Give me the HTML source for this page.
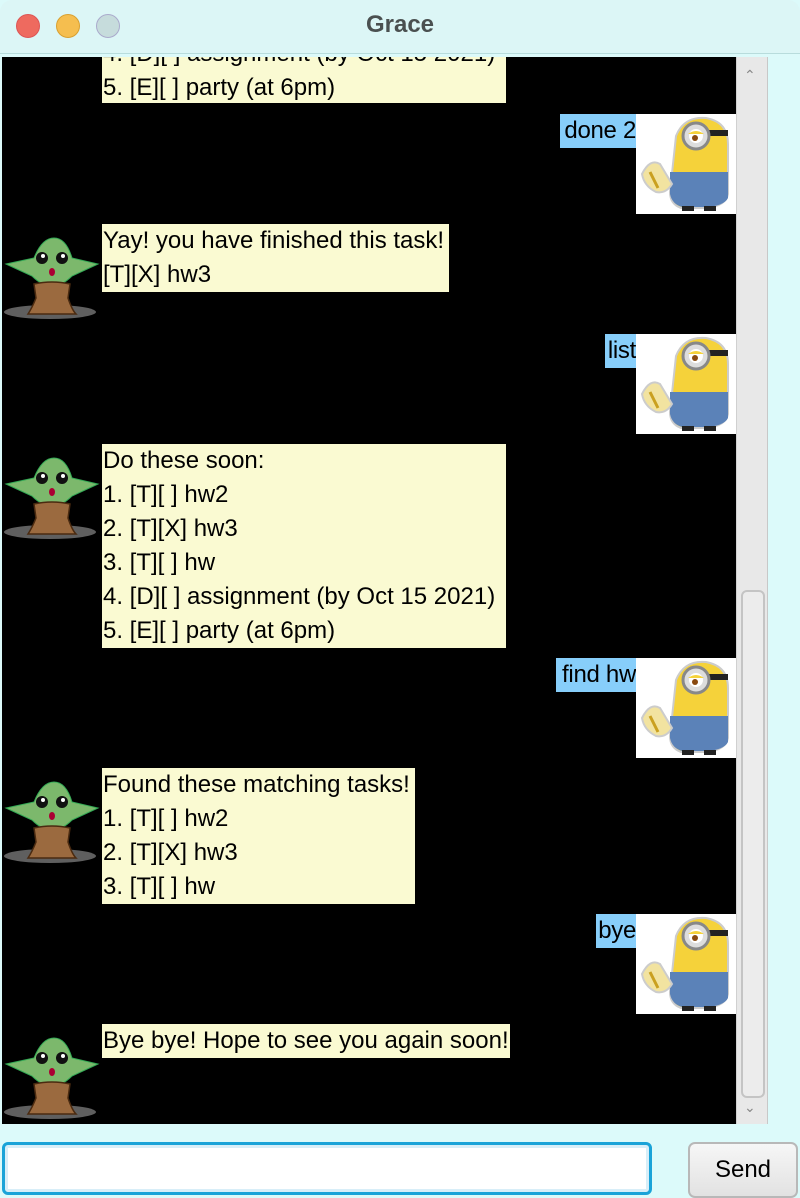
<!DOCTYPE html>
<html><head><meta charset="utf-8"><style>
*{margin:0;padding:0;box-sizing:border-box}
body{width:800px;height:1198px;background:#dcfafa;position:relative;overflow:hidden;font-family:"Liberation Sans",sans-serif}
.title{position:absolute;left:0;top:0;width:800px;height:54px;background:#dcf6f6;border-bottom:1px solid #b8dcdc;border-radius:12px 12px 0 0}
.title span{position:absolute;left:0;width:800px;top:11px;text-align:center;font-weight:bold;font-size:24px;color:#4a5050}
.dot{position:absolute;top:14px;width:24px;height:24px;border-radius:50%}
.chat{position:absolute;left:2px;top:57px;width:734px;height:1067px;background:#000;overflow:hidden}
.sb{position:absolute;left:736px;top:57px;width:32px;height:1067px;background:#e8e8e8;border-left:1px solid #d0d0d0;border-right:1px solid #c8c8c8}
.thumb{position:absolute;left:4px;top:533px;width:24px;height:508px;border:2px solid #c4c4c4;border-radius:6px;background:#ececec}
.b{position:absolute;background:#fafad2;font-size:24px;line-height:34px;color:#000;white-space:pre;letter-spacing:0;padding:0 1px;overflow:hidden}
.u{position:absolute;background:#87cefa;font-size:24px;line-height:34px;color:#000;white-space:pre;text-align:right;letter-spacing:-0.3px;overflow:hidden}
.img{position:absolute;width:100px;height:100px}
.yo{position:absolute;width:100px;height:100px}
.inp{position:absolute;left:2px;top:1142px;width:650px;height:53px;border:3px solid #1aa3d8;border-radius:6px;background:#fff;box-shadow:inset 0 0 0 3px #d8eef8}
.send{position:absolute;left:688px;top:1142px;width:110px;height:56px;border:2px solid #b8b8b8;border-radius:7px;background:linear-gradient(#f6f6f6,#e2e2e2);font-size:24px;text-align:center;line-height:52px;color:#000}
</style></head><body>
<svg width="0" height="0" style="position:absolute">
<defs>
<g id="min">
<rect width="100" height="100" fill="#fff"/>
<path d="M40 22 Q48 2 70 4 Q92 8 92 30 L92 80 Q90 92 70 94 L45 94 Q34 90 34 78 Z" fill="#f5d23a" stroke="#ccc" stroke-width="2"/>
<path d="M34 58 L92 58 L92 84 Q88 92 70 93 L46 93 Q36 90 34 80 Z" fill="#5b82b8"/>
<rect x="46" y="92" width="12" height="5" fill="#222"/><rect x="68" y="92" width="12" height="5" fill="#222"/>
<rect x="70" y="16" width="22" height="6" fill="#222"/>
<circle cx="60" cy="22" r="13" fill="#ddd" stroke="#888" stroke-width="3"/>
<circle cx="60" cy="22" r="7" fill="#fff"/><circle cx="59" cy="24" r="3" fill="#8a4a10"/>
<path d="M52 20 Q60 14 68 20" fill="#f5d23a"/>
<path d="M6 60 Q14 44 24 50 L36 70 Q30 80 20 78 Q8 72 6 60Z" fill="#f2e3a0" stroke="#ccc" stroke-width="2"/>
<path d="M14 58 L22 74" stroke="#caa020" stroke-width="3"/>
</g>
<g id="yo">
<ellipse cx="48" cy="88" rx="46" ry="7" fill="#777" opacity="0.8"/>
<path d="M4 40 L32 34 Q40 14 52 14 Q64 14 70 34 L96 40 L70 52 Q60 62 50 62 Q40 62 30 52Z" fill="#7cb86c" stroke="#3a5" stroke-width="1"/>
<circle cx="40" cy="34" r="6" fill="#111"/><circle cx="60" cy="34" r="6" fill="#111"/>
<circle cx="41" cy="32" r="2" fill="#fff"/><circle cx="61" cy="32" r="2" fill="#fff"/>
<ellipse cx="50" cy="48" rx="3" ry="4" fill="#a03"/>
<path d="M32 60 Q50 56 68 60 L66 74 Q70 86 74 90 L26 90 Q30 84 34 74Z" fill="#9b6a3f" stroke="#4a2a10" stroke-width="1.5"/>
</g>
</defs></svg>
<div class="title"><div class="dot" style="left:16px;background:#ee6a5f;border:1px solid #d55"></div><div class="dot" style="left:56px;background:#f5be4f;border:1px solid #d9a030"></div><div class="dot" style="left:96px;background:#c6dcdc;border:1px solid #aac"></div><span>Grace</span></div>
<div class="chat">
<div class="b" style="left:100px;top:-20px;width:404px;height:66px">4. [D][ ] assignment (by Oct 15 2021)
5. [E][ ] party (at 6pm)</div>
<div class="u" style="left:558px;top:57px;width:76px">done 2</div>
<svg class="img" style="left:634px;top:57px"><use href="#min"/></svg>
<svg class="yo" style="left:0;top:167px"><use href="#yo"/></svg>
<div class="b" style="left:100px;top:167px;width:347px">Yay! you have finished this task!
[T][X] hw3</div>
<div class="u" style="left:603px;top:277px;width:31px">list</div>
<svg class="img" style="left:634px;top:277px"><use href="#min"/></svg>
<svg class="yo" style="left:0;top:387px"><use href="#yo"/></svg>
<div class="b" style="left:100px;top:387px;width:404px">Do these soon:
1. [T][ ] hw2
2. [T][X] hw3
3. [T][ ] hw
4. [D][ ] assignment (by Oct 15 2021)
5. [E][ ] party (at 6pm)</div>
<div class="u" style="left:554px;top:601px;width:80px">find hw</div>
<svg class="img" style="left:634px;top:601px"><use href="#min"/></svg>
<svg class="yo" style="left:0;top:711px"><use href="#yo"/></svg>
<div class="b" style="left:100px;top:711px;width:313px">Found these matching tasks!
1. [T][ ] hw2
2. [T][X] hw3
3. [T][ ] hw</div>
<div class="u" style="left:594px;top:857px;width:40px">bye</div>
<svg class="img" style="left:634px;top:857px"><use href="#min"/></svg>
<svg class="yo" style="left:0;top:967px"><use href="#yo"/></svg>
<div class="b" style="left:100px;top:967px;width:408px">Bye bye! Hope to see you again soon!</div>
</div>
<div class="sb"><div style="position:absolute;left:7px;top:10px;font-size:14px;color:#888">&#8963;</div><div class="thumb"></div><div style="position:absolute;left:7px;top:1042px;font-size:14px;color:#888">&#8964;</div></div>
<div class="inp"></div>
<div class="send">Send</div>
</body></html>
